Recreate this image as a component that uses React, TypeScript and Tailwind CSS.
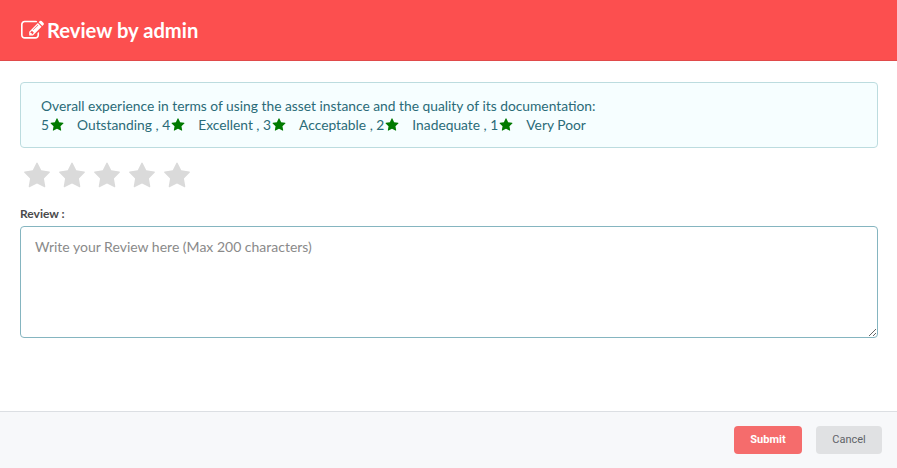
import React from "react";

const legend = [
  { n: 5, label: "Outstanding" },
  { n: 4, label: "Excellent" },
  { n: 3, label: "Acceptable" },
  { n: 2, label: "Inadequate" },
  { n: 1, label: "Very Poor" },
];

const Star = ({ className }: { className: string }) => (
  <svg viewBox="0 0 1792 1792" fill="currentColor" className={className}>
    <path d="M1728 647q0 22-26 48l-363 354 86 500q1 7 1 20 0 21-10.5 35.5t-30.5 14.5q-19 0-40-12l-449-236-449 236q-22 12-40 12-21 0-31.5-14.5t-10.5-35.5q0-6 2-20l86-500-364-354q-25-27-25-48 0-37 56-46l502-73 225-455q19-41 49-41t49 41l225 455 502 73q56 9 56 46z" />
  </svg>
);

const EditIcon = ({ className }: { className: string }) => (
  <svg viewBox="0 0 1792 1792" fill="currentColor" className={className}>
    <path d="M888 1184l116-116-152-152-116 116v56h96v96h56zm440-720q-16-16-33 1l-350 350q-17 17-1 33t33-1l350-350q17-17 1-33zm80 594v190q0 119-84.5 203.5t-203.5 84.5h-832q-119 0-203.5-84.5t-84.5-203.5v-832q0-119 84.5-203.5t203.5-84.5h832q63 0 117 25 15 7 18 23 3 17-9 29l-49 49q-14 14-32 8-23-6-45-6h-832q-66 0-113 47t-47 113v832q0 66 47 113t113 47h832q66 0 113-47t47-113v-126q0-13 9-22l64-64q15-15 35-7t20 29zm-96-738l288 288-672 672h-288v-288zm444 132l-92 92-288-288 92-92q28-28 68-28t68 28l152 152q28 28 28 68t-28 68z" />
  </svg>
);

const App = () => {
  return (
    <div className="flex h-[468px] w-[897px] flex-col overflow-hidden bg-white font-['Lato',sans-serif]">
      <div className="flex h-[61px] shrink-0 items-center gap-[3px] border-b border-[#e04a4a] bg-[#fc4f4f] pl-[21px] text-white">
        <EditIcon className="h-[23px] w-[23px]" />
        <h1 className="text-[20.2px] font-bold leading-none">Review by admin</h1>
      </div>

      <div className="flex-1 pl-[20px] pr-[19px] pt-[21px]">
        <div className="h-[66px] rounded-[4px] border border-[#bcdcdf] bg-[#f6feff] px-[20px] pt-[13px] text-[13.8px] leading-[19px] text-[#2a6b78]">
          <p>Overall experience in terms of using the asset instance and the quality of its documentation:</p>
          <p className="flex items-center">
            {legend.map((item, i) => (
              <span key={item.n} className="flex items-center whitespace-pre">
                {item.n}
                <Star className="ml-[1px] mr-[13px] h-[14px] w-[14px] text-[#007a00]" />
                {item.label}
                {i < legend.length - 1 ? " , " : ""}
              </span>
            ))}
          </p>
        </div>

        <div className="ml-[3px] mt-[14px] flex gap-[7px]">
          {[1, 2, 3, 4, 5].map((s) => (
            <Star key={s} className="h-[28px] w-[28px] text-[#dadada]" />
          ))}
        </div>

        <label className="mt-[17px] block text-[12px] font-bold leading-[14px] text-[#4a4a4a]">Review :</label>
        <textarea
          className="mt-[5px] block h-[112px] w-full rounded-[4px] border border-[#85b5c0] px-[14px] py-[11px] text-[14px] leading-[18px] outline-none placeholder:text-[#8a8a8a]"
          placeholder="Write your Review here (Max 200 characters)"
        />
      </div>

      <div className="flex h-[57px] shrink-0 items-center justify-end gap-[14px] border-t border-[#dcdfe3] bg-[#f7f8fa] pr-[15px]">
        <button className="h-[28px] w-[68px] rounded-[4px] bg-[#f56c6c] font-['Roboto',sans-serif] text-[11px] font-bold text-white">
          Submit
        </button>
        <button className="h-[28px] w-[66px] rounded-[4px] bg-[#e0e1e3] font-['Roboto',sans-serif] text-[11px] text-[#5f6368]">
          Cancel
        </button>
      </div>
    </div>
  );
};

export default App;
